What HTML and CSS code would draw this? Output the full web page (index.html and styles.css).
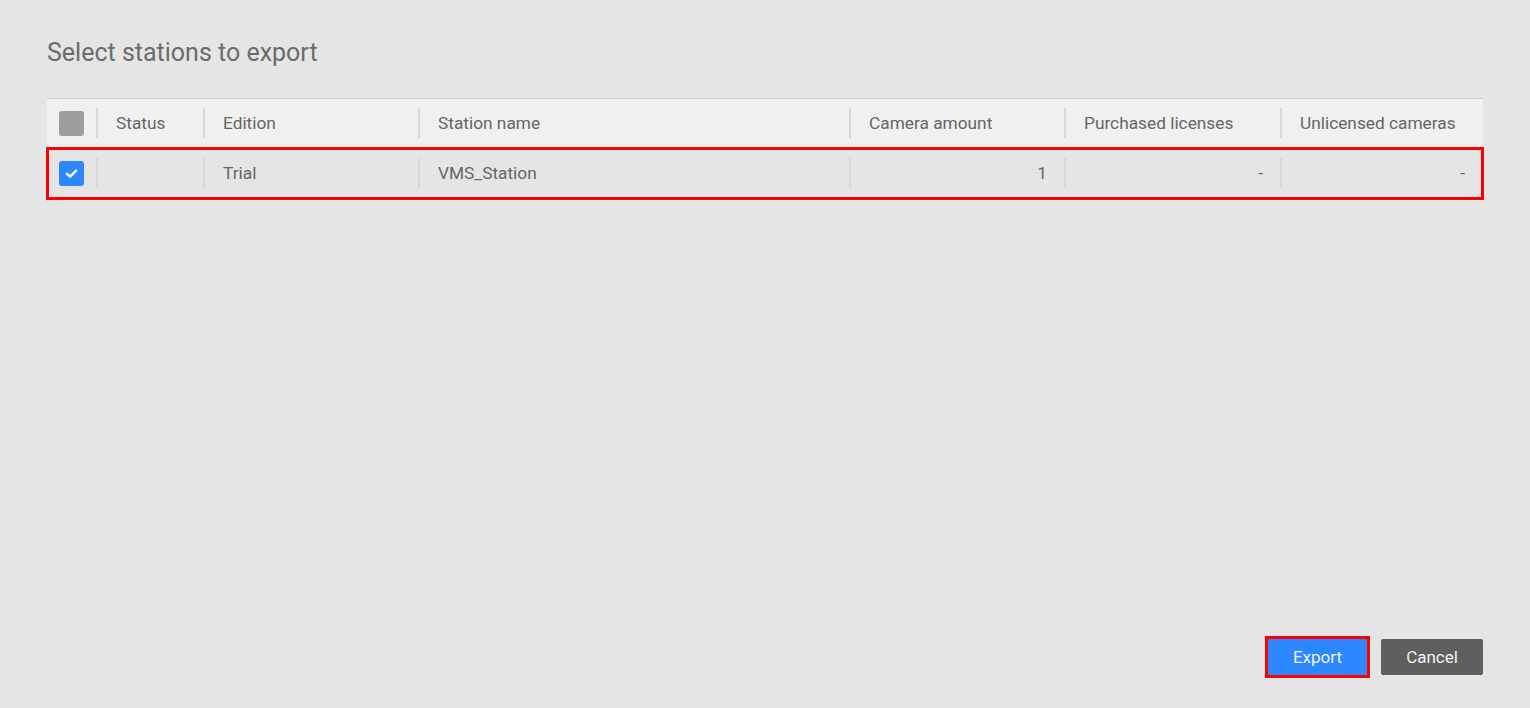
FILE: index.html
```html
<!DOCTYPE html>
<html lang="en">
<head>
    <meta charset="UTF-8">
    <title>Select stations to export</title>
    <link rel="stylesheet" href="styles.css">
</head>
<body>
    <div class="dialog">
        <h1 class="dialog-title">Select stations to export</h1>

        <div class="station-table">
            <div class="table-head">
                <div class="cell cell-check"><span class="check check-off"></span></div>
                <div class="cell">Status</div>
                <div class="cell">Edition</div>
                <div class="cell">Station name</div>
                <div class="cell">Camera amount</div>
                <div class="cell">Purchased licenses</div>
                <div class="cell">Unlicensed cameras</div>
            </div>
            <div class="table-row selected">
                <div class="cell cell-check">
                    <span class="check check-on">
                        <svg viewBox="0 0 24 24" width="17" height="17"><path d="M5.5 12.5l4.5 4L18.5 8" fill="none" stroke="#fff" stroke-width="3.4" stroke-linecap="round" stroke-linejoin="round"/></svg>
                    </span>
                </div>
                <div class="cell"></div>
                <div class="cell">Trial</div>
                <div class="cell">VMS_Station</div>
                <div class="cell num">1</div>
                <div class="cell num">-</div>
                <div class="cell num">-</div>
            </div>
        </div>

        <div class="dialog-footer">
            <button class="btn btn-primary marked">Export</button>
            <button class="btn btn-dark">Cancel</button>
        </div>
    </div>
</body>
</html>
```

FILE: styles.css
```css
html, body {
    margin: 0;
    padding: 0;
    height: 100%;
}

body {
    background-color: #e5e5e5;
    color: #666;
    font-family: Roboto, "Liberation Sans", sans-serif;
}

.dialog {
    display: flex;
    flex-direction: column;
    height: 100vh;
    box-sizing: border-box;
    padding: 0 47px 33px 47px;
}

.dialog-title {
    margin: 38px 0 31px 0;
    font-size: 25px;
    font-weight: 400;
    line-height: 29px;
    color: #6b6b6b;
}

.station-table {
    border-top: 1px solid #d2d2d2;
}

.table-head, .table-row {
    display: grid;
    grid-template-columns: 50px 107px 215px 431px 215px 216px 1fr;
    align-items: center;
}

.table-head {
    height: 49px;
    background-color: #f0f0f0;
}

.table-row {
    height: 51px;
    outline: 3px solid #ff0000;
    outline-offset: -2px;
}

.cell {
    position: relative;
    height: 21px;
    line-height: 21px;
    padding: 0 18px 0 19px;
    font-size: 17.3px;
    white-space: nowrap;
}

.cell + .cell::before {
    content: "";
    position: absolute;
    left: -1px;
    top: -5px;
    bottom: -4px;
    border-left: 2px solid #d8d8d8;
}

.cell-check {
    padding: 0 0 0 12px;
}

.cell.num {
    text-align: right;
}

.check {
    display: flex;
    align-items: center;
    justify-content: center;
    width: 25px;
    height: 25px;
    border-radius: 3px;
    margin-top: -2px;
}

.check-off {
    background-color: #9e9e9e;
}

.check-on {
    background-color: #2d88ff;
}

.dialog-footer {
    margin-top: auto;
    display: flex;
    justify-content: flex-end;
    gap: 14px;
}

.btn {
    height: 36px;
    border: none;
    border-radius: 2px;
    font-family: Roboto, "Liberation Sans", sans-serif;
    font-size: 17px;
    color: #f2f2f2;
    cursor: pointer;
}

.btn-primary {
    width: 99px;
    background-color: #2d88ff;
}

.btn-dark {
    width: 102px;
    background-color: #5f5f5f;
}

.marked {
    border-radius: 0;
    outline: 3px solid #ff0000;
}
```
